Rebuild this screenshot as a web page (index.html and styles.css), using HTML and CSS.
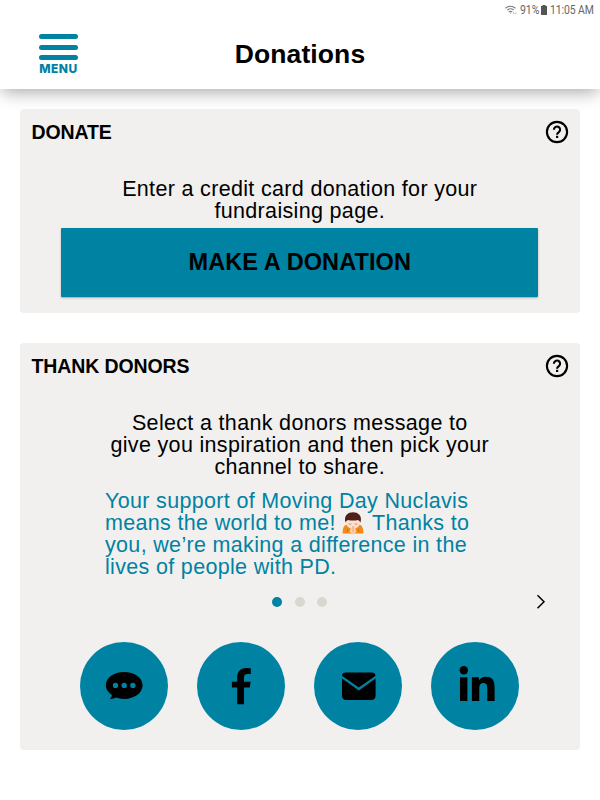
FILE: index.html
```html
<!DOCTYPE html>
<html lang="en">
<head>
    <meta charset="UTF-8">
    <meta name="viewport" content="width=device-width, initial-scale=1.0">
    <title>Donations</title>
    <link rel="stylesheet" href="styles.css">
</head>
<body>

<header class="header">
    <div class="status-bar">
        <svg class="wifi" viewBox="0 0 13 10" width="13" height="10">
            <path d="M.5 3.200Q5.500-.8 10.500 3.200M2.200 5.100Q5.500 2.400 8.800 5.100M3.800 7Q5.500 5.600 7.200 7" fill="none" stroke="#777" stroke-width="1.100"/>
            <path d="M4.500 7.500h2L5.500 9zM7.700 8.400l1-1.300 1 1.300zM9.800 7.700h2l-1 1.300z" fill="#aaa"/>
        </svg>
        <span class="battery-level">91%</span>
        <svg class="battery" viewBox="0 0 6 10" width="6" height="10">
            <path d="M1.500 0h3v1H6v9H0V1h1.500z" fill="#555"/>
        </svg>
        <span class="time">11:05 AM</span>
    </div>
    <div class="nav">
        <button class="menu-btn">
            <span class="bar"></span>
            <span class="bar"></span>
            <span class="bar"></span>
            <span class="menu-label">MENU</span>
        </button>
        <h1>Donations</h1>
    </div>
</header>

<main>
    <section class="card donate">
        <div class="card-title">
            <h2>DONATE</h2>
            <svg class="help" viewBox="0 0 24 24" width="24" height="24">
                <circle cx="12" cy="12" r="10.100" fill="none" stroke="#000" stroke-width="2.100"/>
                <path d="M8.900 9.700a3.100 3.100 0 1 1 5.100 2.300c-1.100.9-1.900 1.300-1.900 2.700" fill="none" stroke="#000" stroke-width="2.100"/>
                <rect x="11" y="15.800" width="2.200" height="2.200"/>
            </svg>
        </div>
        <p class="intro">Enter a credit card donation for your<br>fundraising page.</p>
        <button class="donate-btn">MAKE A DONATION</button>
    </section>

    <section class="card thank">
        <div class="card-title">
            <h2>THANK DONORS</h2>
            <svg class="help" viewBox="0 0 24 24" width="24" height="24">
                <circle cx="12" cy="12" r="10.100" fill="none" stroke="#000" stroke-width="2.100"/>
                <path d="M8.900 9.700a3.100 3.100 0 1 1 5.100 2.300c-1.100.9-1.900 1.300-1.900 2.700" fill="none" stroke="#000" stroke-width="2.100"/>
                <rect x="11" y="15.800" width="2.200" height="2.200"/>
            </svg>
        </div>
        <p class="intro">Select a thank donors message to<br>give you inspiration and then pick your<br>channel to share.</p>
        <p class="message">Your support of Moving Day Nuclavis<br>means the world to me! <svg class="emoji" viewBox="0 0 22 22" width="22" height="22">
                <path d="M.7 21.500c-.4-5 1.300-9 4.800-9h11c3.500 0 5.200 4 4.800 9z" fill="#f58a16"/>
                <ellipse cx="11" cy="10.500" rx="7" ry="6.500" fill="#ffe0cb"/>
                <path d="M3.500 10.500C1.500 3.500 6 .3 11 .3s9.500 3.200 7.500 10.200c-.6-1.300-1.500-2-2.500-2.500-3 .8-7 .8-10 0-1.200.6-2 1.200-2.500 2.500z" fill="#4f1f18"/>
                <path d="M6.800 11.800q1.300.9 2.600 0M12.600 11.800q1.300.9 2.600 0" fill="none" stroke="#9c6d55" stroke-width=".7"/>
                <path d="M7.500 19.500l2.800-6h1.400l2.800 6-2 2h-3z" fill="#ffd2ae"/>
                <path d="M11 14v6" fill="none" stroke="#d99a70" stroke-width=".7"/>
                <path d="M6 16.500l-1 3.500M16 16.500l1 3.500" fill="none" stroke="#cf6110" stroke-width=".8"/>
            </svg> Thanks to<br>you, we’re making a difference in the<br>lives of people with PD.</p>
        <div class="pager">
            <div class="dots">
                <span class="dot active"></span>
                <span class="dot"></span>
                <span class="dot"></span>
            </div>
            <svg class="next" viewBox="0 0 10 16" width="10" height="16">
                <path d="M1.500 1.200L8 7.700l-6.500 6.500" fill="none" stroke="#000" stroke-width="1.500"/>
            </svg>
        </div>
        <div class="channels">
            <a class="channel" href="#" aria-label="Text message">
                <svg viewBox="0 0 88 88" width="88" height="88">
                    <path fill-rule="evenodd" d="M44.200 30C54.500 30 62.600 35.800 62.600 43.300S54.500 57 44.200 57c-3 0-5.800-.5-8.200-1.400-1.800.9-3.800 1.500-6.200 1.300 1.400-1.200 2.100-2.400 2.100-3.900-3.700-2.400-6.100-5.800-6.100-9.700C25.800 35.800 34 30 44.200 30zM35.500 40.700a2.700 2.700 0 1 0 0 5.400 2.700 2.700 0 0 0 0-5.400zm8.700 0a2.700 2.700 0 1 0 0 5.400 2.700 2.700 0 0 0 0-5.400zm8.700 0a2.700 2.700 0 1 0 0 5.400 2.700 2.700 0 0 0 0-5.400z"/>
                </svg>
            </a>
            <a class="channel" href="#" aria-label="Facebook">
                <svg viewBox="0 0 88 88" width="88" height="88">
                    <path d="M40.200 62.300V45.600h-5.300v-5.800h5.300v-4.300c0-6 3.500-9.400 8.800-9.400 2.200 0 4.100.3 4.800.5v5.400h-3.300c-2.600 0-3.500 1.300-3.500 3.300v4.500h6.600l-.8 5.800H47v16.700z"/>
                </svg>
            </a>
            <a class="channel" href="#" aria-label="Email">
                <svg viewBox="0 0 88 88" width="88" height="88">
                    <path d="M31.500 30.500H58c2 0 3.500 1.200 3.600 3.300L44.800 45.500 28 33.800c.1-2.100 1.500-3.300 3.500-3.300z"/>
                    <path d="M28 36.500l16.800 12 16.800-12V54c0 2.300-1.600 4-3.900 4H32c-2.300 0-4-1.700-4-4z"/>
                </svg>
            </a>
            <a class="channel" href="#" aria-label="LinkedIn">
                <svg viewBox="0 0 88 88" width="88" height="88">
                    <circle cx="32.800" cy="28.200" r="4.200"/>
                    <rect x="29" y="35.300" width="7.400" height="23.700"/>
                    <path d="M40.900 35.300h7v3.200c1.200-2.200 3.700-3.800 7-3.800 7 0 8.700 4.300 8.700 10.700V59h-7.300V46.800c0-3-.2-5.800-3.800-5.800-3.500 0-4.200 2.700-4.200 5.600V59h-7.400z"/>
                </svg>
            </a>
        </div>
    </section>
</main>

</body>
</html>
```
FILE: styles.css
```css
* { box-sizing: border-box; }
body { margin: 0; background: #fff; color: #000; font-family: "Liberation Sans", Arial, sans-serif; }
h1, h2, p { margin: 0; }
button { border: none; font-family: inherit; color: inherit; cursor: pointer; }

.header { height: 89px; background: #fff; box-shadow: 0 5px 16px -2px rgba(0,0,0,0.35); }
.status-bar { display: flex; justify-content: flex-end; align-items: center; height: 19px; padding-right: 7px; font-family: Roboto, sans-serif; font-size: 12px; color: #666; white-space: nowrap; }
.battery-level, .time { transform: scaleX(0.870); transform-origin: left; }
.wifi { margin-right: 2px; }
.battery-level { width: 19px; }
.battery { margin: 0 3px 0 2px; }
.time { width: 43px; letter-spacing: -0.100px; }
.nav { display: grid; grid-template-columns: 100px 1fr 100px; height: 70px; }
.menu-btn { display: flex; flex-direction: column; justify-self: start; width: 39px; margin: 15px 0 0 39px; padding: 0; background: none; color: #0082a3; }
.bar { width: 39px; height: 5px; margin-bottom: 5.500px; border-radius: 3px; background: #0082a3; }
.menu-label { margin-top: -4px; font-family: Inter, sans-serif; font-size: 12px; font-weight: 800; line-height: 13px; letter-spacing: 0.500px; }
h1 { padding-top: 20px; text-align: center; font-size: 26.500px; line-height: 30px; letter-spacing: 0.100px; }

main { display: flex; flex-direction: column; gap: 30px; padding: 20px 20px 0 19.500px; }
.card { border-radius: 4px; background: #f1f0ef; }
.donate { height: 204px; }
.thank { height: 407px; }
.card-title { display: flex; justify-content: space-between; align-items: center; height: 46px; padding: 0 11px 0 12px; }
h2 { font-size: 19.500px; line-height: 24px; letter-spacing: -0.120px; }
.intro, .message { font-size: 21.500px; line-height: 22px; letter-spacing: 0.330px; white-space: nowrap; }
.intro { padding-top: 23px; text-align: center; }
.donate-btn { display: block; width: 477px; height: 69px; margin: 6px auto 0; border-radius: 1px; background: #0082a3; box-shadow: 0 1px 2px rgba(0,0,0,0.3); font-size: 23.500px; font-weight: bold; letter-spacing: 0.100px; }
.message { padding: 12px 0 0 85.500px; color: #0082a3; }
.emoji { height: 22px; margin-right: 2px; vertical-align: -4px; }
.pager { display: grid; grid-template-columns: 1fr auto 1fr; align-items: center; height: 16px; margin-top: 16px; }
.dots { display: flex; grid-column: 2; gap: 12.500px; }
.dot { width: 10px; height: 10px; border-radius: 50%; background: #d8d8cf; }
.dot.active { background: #0082a3; }
.next { justify-self: end; margin-right: 34px; }
.channels { display: flex; justify-content: center; gap: 29px; margin-top: 32px; }
.channel { width: 88px; height: 88px; border-radius: 50%; background: #0082a3; }
.channel svg { display: block; }
```
